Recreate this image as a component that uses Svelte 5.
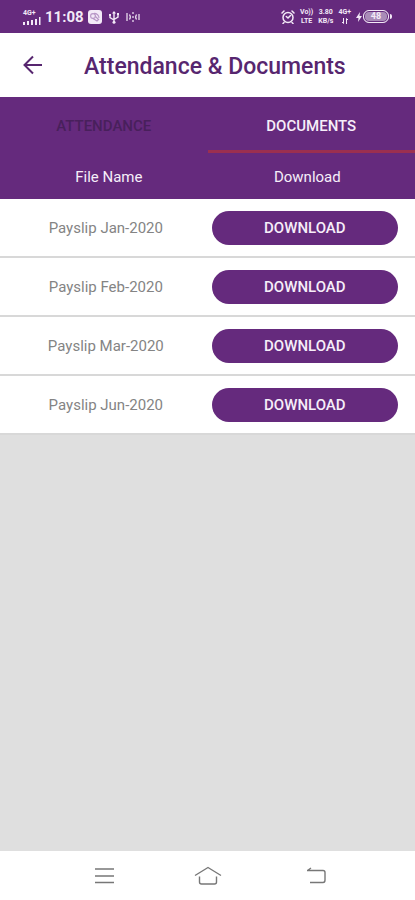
<script lang="ts">
  type Tab = 'attendance' | 'documents';

  const tabs: { id: Tab; label: string }[] = [
    { id: 'attendance', label: 'ATTENDANCE' },
    { id: 'documents', label: 'DOCUMENTS' }
  ];

  const files = ['Payslip Jan-2020', 'Payslip Feb-2020', 'Payslip Mar-2020', 'Payslip Jun-2020'];

  let activeTab = $state<Tab>('documents');
</script>

<div class="screen">
  <div class="status-bar">
    <div class="status-group">
      <div class="signal">
        <span>4G+</span>
        <svg width="18" height="8" viewBox="0 0 18 8" fill="currentColor" aria-hidden="true">
          <path d="M0 5h2v3H0zM4 4h2v4H4zM8 3h2v5H8zM12 2h2v6h-2zM16 0h1.500v8H16z" />
        </svg>
      </div>
      <span class="time">11:08</span>
      <svg width="14" height="14" viewBox="0 0 14 14" aria-hidden="true">
        <rect width="14" height="14" rx="3" fill="#f3e9f7" />
        <g fill="none" stroke="#b796c6" stroke-width="1.100">
          <circle cx="5" cy="6" r="2.400" />
          <path d="M6 3.400c3 0 5 2 5 4.600M5 8.500l4 2.500 2-2M7 6l3 3" />
        </g>
      </svg>
      <svg class="usb" width="12" height="14" viewBox="0 0 12 14" fill="none" stroke="currentColor" stroke-width="1.400" aria-hidden="true">
        <path d="M6 2v10M2 5v2.500l4 2.500M10 4.500V7L6 9.500" />
        <path d="M4 3.500L6 1l2 2.500z" fill="currentColor" stroke="none" />
        <circle cx="6" cy="12.300" r="1.500" fill="currentColor" stroke="none" />
        <path d="M1 4h2v2H1zM9 3h2v2H9z" fill="currentColor" stroke="none" />
      </svg>
      <svg width="14" height="12" viewBox="0 0 14 12" fill="none" stroke="currentColor" stroke-width="1.200" aria-hidden="true">
        <path d="M1 2v8M3.500 3.500c1 1.500 1 3.500 0 5M10.500 3.500c-1 1.500-1 3.500 0 5M13 3v6M7 1v2M7 5v2M7 9v2" />
      </svg>
    </div>

    <div class="status-group right">
      <svg width="14" height="14" viewBox="0 0 14 14" fill="none" stroke="currentColor" stroke-width="1.500" stroke-linecap="round" aria-hidden="true">
        <circle cx="7" cy="7.500" r="5" />
        <path d="M1 3l2-2M13 3l-2-2M9.500 5.500L7 8 5.300 6.500M3 12.500l-1 1M11 12.500l1 1" />
      </svg>
      <div class="stack"><span>Vo))</span><span>LTE</span></div>
      <div class="stack"><span>3.80</span><span>KB/s</span></div>
      <div class="stack">
        <span>4G+</span>
        <svg width="8" height="8" viewBox="0 0 8 8" fill="none" stroke="currentColor" aria-hidden="true">
          <path d="M2.500 1v5.500M1 5l1.500 1.500M5.500 7V1.500M7 3L5.500 1.500" />
        </svg>
      </div>
      <div class="power">
        <svg width="6" height="10" viewBox="0 0 6 10" fill="currentColor" aria-hidden="true">
          <path d="M4 0L0 6h2.500L2 10l4-6H3.500z" />
        </svg>
        <span class="battery">48</span>
        <span class="battery-tip"></span>
      </div>
    </div>
  </div>

  <header class="app-bar">
    <button class="back" aria-label="Back">
      <svg width="20" height="20" viewBox="0 0 20 20" fill="none" stroke="currentColor" stroke-width="2" aria-hidden="true">
        <path d="M19 10H2M10 1.500L1.500 10l8.500 8.500" />
      </svg>
    </button>
    <h1>Attendance &amp; Documents</h1>
  </header>

  <div class="tabs" role="tablist">
    {#each tabs as tab (tab.id)}
      <button
        class="tab"
        class:active={activeTab === tab.id}
        role="tab"
        aria-selected={activeTab === tab.id}
        onclick={() => (activeTab = tab.id)}
      >
        {tab.label}
      </button>
    {/each}
  </div>

  <main>
    {#if activeTab === 'documents'}
      <table>
        <thead>
          <tr>
            <th scope="col">File Name</th>
            <th scope="col">Download</th>
          </tr>
        </thead>
        <tbody>
          {#each files as file (file)}
            <tr>
              <td>{file}</td>
              <td><button class="download" aria-label="Download {file}">DOWNLOAD</button></td>
            </tr>
          {/each}
        </tbody>
      </table>
    {/if}
  </main>

  <nav class="nav-bar" aria-label="System">
    <button aria-label="Recent apps">
      <svg width="28" height="20" viewBox="0 0 28 20" fill="none" stroke="currentColor" stroke-width="1.400" aria-hidden="true">
        <path d="M6 3h19M6 10h19M6 16.500h19" />
      </svg>
    </button>
    <button aria-label="Home">
      <svg width="28" height="20" viewBox="0 0 28 20" fill="none" stroke="currentColor" stroke-width="1.400" stroke-linejoin="round" aria-hidden="true">
        <path d="M1 9.500L14 1.500l13 8M5.500 10.500V16q0 2 2 2h13q2 0 2-2v-5.500" />
      </svg>
    </button>
    <button aria-label="Previous">
      <svg width="28" height="20" viewBox="0 0 28 20" fill="none" stroke="currentColor" stroke-width="1.400" aria-hidden="true">
        <path d="M9 4.500h16q2 0 2 2V14q0 2.500-2 2.500H12M13 2L9.500 4.500" />
      </svg>
    </button>
  </nav>
</div>

<style>
  :global(body) {
    margin: 0;
  }

  .screen {
    --purple: #652a7d;
    display: flex;
    flex-direction: column;
    min-height: 100vh;
    background: #dfdfdf;
    font-family: Roboto, 'Liberation Sans', sans-serif;
  }

  button {
    margin: 0;
    padding: 0;
    border: 0;
    background: none;
    font: inherit;
    color: inherit;
    cursor: pointer;
  }

  svg {
    display: block;
    flex: none;
  }

  .status-bar {
    display: flex;
    justify-content: space-between;
    align-items: center;
    height: 33px;
    padding: 0 23px;
    background: var(--purple);
    color: #f3e9f7;
  }

  .status-group {
    display: flex;
    align-items: center;
    gap: 4px;
  }

  .status-group.right {
    gap: 5px;
  }

  .signal,
  .stack {
    display: flex;
    flex-direction: column;
    font-size: 7px;
    font-weight: 700;
    line-height: 9px;
  }

  .signal {
    line-height: 8px;
  }

  .stack {
    align-items: center;
  }

  .time {
    font-size: 15px;
    font-weight: 700;
    line-height: 18px;
  }

  .usb {
    margin: 0 2px;
  }

  .power {
    display: flex;
    align-items: center;
    gap: 1px;
  }

  .battery {
    width: 24px;
    border: 1px solid #f3e9f7;
    border-radius: 6px;
    box-shadow: inset 0 0 0 1px var(--purple);
    background: #a98bb7;
    font-size: 9px;
    font-weight: 700;
    line-height: 11px;
    text-align: center;
  }

  .battery-tip {
    width: 2px;
    height: 5px;
    border-radius: 0 2px 2px 0;
    background: #f3e9f7;
  }

  .app-bar {
    display: flex;
    align-items: center;
    gap: 41px;
    height: 64px;
    padding: 0 23px;
    background: #fff;
    color: #57266f;
  }

  h1 {
    margin: 0;
    padding-top: 3px;
    font-size: 23px;
    font-weight: 500;
    line-height: 32px;
  }

  .tabs {
    display: flex;
    background: var(--purple);
  }

  .tab {
    flex: 1;
    height: 56px;
    border-top: 4px solid transparent;
    border-bottom: 3px solid transparent;
    font-size: 15px;
    font-weight: 500;
    color: #48205b;
  }

  .tab.active {
    border-bottom-color: #9b2f50;
    color: #f6eef9;
  }

  main {
    flex: 1;
  }

  table {
    width: 100%;
    border-collapse: collapse;
    table-layout: fixed;
  }

  th {
    height: 45px;
    padding: 1px 12px 0 0;
    background: var(--purple);
    font-size: 15px;
    font-weight: 400;
    color: #f6eef9;
  }

  th:first-child {
    width: 51%;
    padding: 1px 0 0 6px;
    box-sizing: border-box;
  }

  td {
    height: 57px;
    padding: 0 17px 0 0;
    border-bottom: 2px solid #d8d8d8;
    background: #fff;
    font-size: 15px;
    text-align: center;
    color: #848484;
  }

  td:first-child {
    padding: 0;
  }

  .download {
    display: block;
    width: 100%;
    height: 34px;
    border-radius: 17px;
    background: var(--purple);
    font-size: 15px;
    font-weight: 500;
    color: #f6eef9;
  }

  .nav-bar {
    display: flex;
    justify-content: space-between;
    align-items: center;
    height: 49px;
    padding: 0 89px;
    background: #fff;
    color: #777;
  }
</style>
